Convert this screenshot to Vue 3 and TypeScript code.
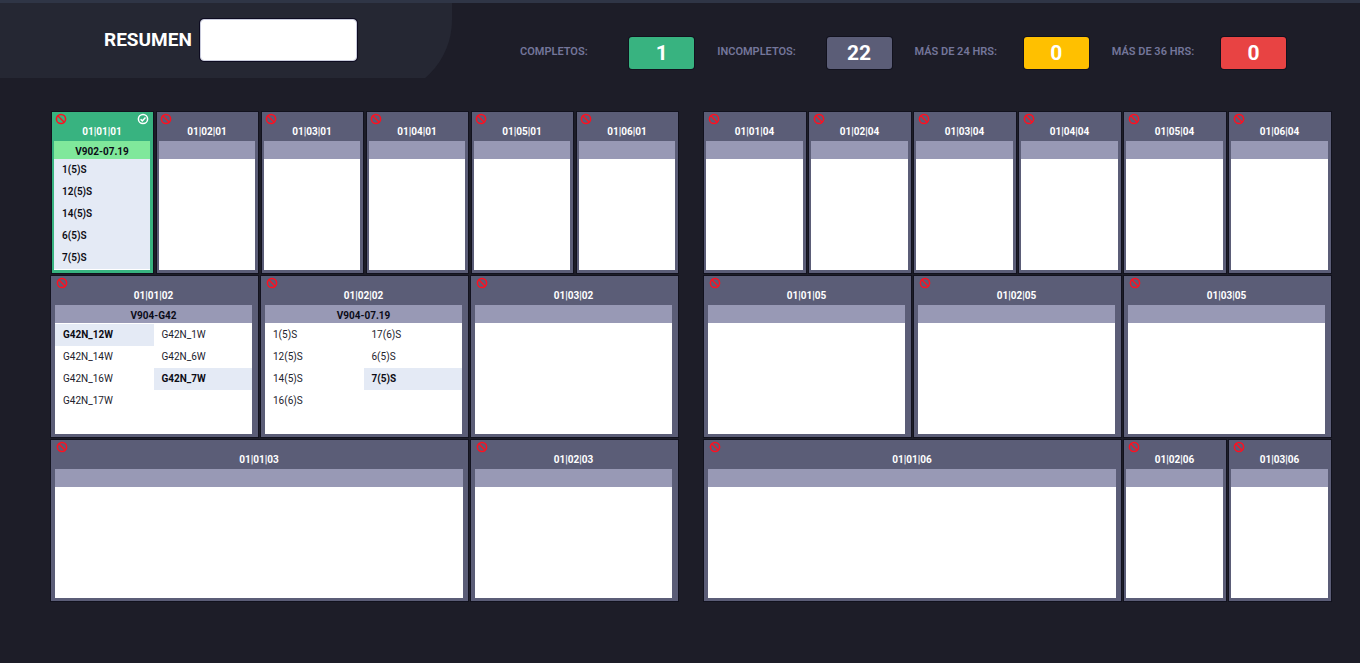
<script setup lang="ts">
import { ref } from 'vue'

interface Item {
  label: string
  active?: boolean
}

interface Slot {
  code: string
  span: number
  model?: string
  items?: Item[]
  done?: boolean
}

interface Stat {
  label: string
  value: number
  tone: string
}

const search = ref('')

const stats: Stat[] = [
  { label: 'COMPLETOS:', value: 1, tone: 'green' },
  { label: 'INCOMPLETOS:', value: 22, tone: 'slate' },
  { label: 'MÁS DE 24 HRS:', value: 0, tone: 'amber' },
  { label: 'MÁS DE 36 HRS:', value: 0, tone: 'red' },
]

const single = (position: number, level: string): Slot => ({
  code: `01|0${position}|${level}`,
  span: 1,
})

const boards: { name: string; slots: Slot[] }[] = [
  {
    name: 'left',
    slots: [
      {
        code: '01|01|01',
        span: 1,
        model: 'V902-07.19',
        done: true,
        items: ['1(5)S', '12(5)S', '14(5)S', '6(5)S', '7(5)S'].map((label) => ({ label, active: true })),
      },
      ...[2, 3, 4, 5, 6].map((n) => single(n, '01')),
      {
        code: '01|01|02',
        span: 2,
        model: 'V904-G42',
        items: [
          { label: 'G42N_12W', active: true },
          { label: 'G42N_14W' },
          { label: 'G42N_16W' },
          { label: 'G42N_17W' },
          { label: 'G42N_1W' },
          { label: 'G42N_6W' },
          { label: 'G42N_7W', active: true },
        ],
      },
      {
        code: '01|02|02',
        span: 2,
        model: 'V904-07.19',
        items: [
          { label: '1(5)S' },
          { label: '12(5)S' },
          { label: '14(5)S' },
          { label: '16(6)S' },
          { label: '17(6)S' },
          { label: '6(5)S' },
          { label: '7(5)S', active: true },
        ],
      },
      { code: '01|03|02', span: 2 },
      { code: '01|01|03', span: 4 },
      { code: '01|02|03', span: 2 },
    ],
  },
  {
    name: 'right',
    slots: [
      ...[1, 2, 3, 4, 5, 6].map((n) => single(n, '04')),
      { code: '01|01|05', span: 2 },
      { code: '01|02|05', span: 2 },
      { code: '01|03|05', span: 2 },
      { code: '01|01|06', span: 4 },
      { code: '01|02|06', span: 1 },
      { code: '01|03|06', span: 1 },
    ],
  },
]
</script>

<template>
  <div class="page">
    <header class="top">
      <div class="summary">
        <label class="summary-label" for="summary-input">RESUMEN</label>
        <input id="summary-input" v-model="search" class="summary-input" type="text" />
      </div>
      <dl class="stats">
        <div v-for="stat in stats" :key="stat.label" class="stat">
          <dt class="stat-label">{{ stat.label }}</dt>
          <dd class="stat-value" :class="stat.tone">{{ stat.value }}</dd>
        </div>
      </dl>
    </header>

    <main class="boards">
      <section v-for="board in boards" :key="board.name" class="board" :class="board.name">
        <article
          v-for="slot in board.slots"
          :key="slot.code"
          class="slot"
          :class="[`span-${slot.span}`, { done: slot.done }]"
        >
          <header class="slot-head">
            <svg class="ban" viewBox="0 0 12 12" aria-hidden="true">
              <circle cx="6" cy="6" r="4.6" />
              <path d="M2.8 2.8l6.4 6.4" />
            </svg>
            <h2 class="slot-code">{{ slot.code }}</h2>
            <svg v-if="slot.done" class="check" viewBox="0 0 12 12" aria-hidden="true">
              <circle cx="6" cy="6" r="4.6" />
              <path d="M3.6 6.2l1.7 1.7 3.2-3.5" />
            </svg>
          </header>
          <div class="slot-model">{{ slot.model }}</div>
          <ul class="items">
            <li v-for="item in slot.items" :key="item.label" class="item" :class="{ active: item.active }">
              {{ item.label }}
            </li>
          </ul>
        </article>
      </section>
    </main>
  </div>
</template>

<style>
html {
  background: #1d1d28;
}
body {
  margin: 0;
}
</style>

<style scoped>
.page {
  box-sizing: border-box;
  min-height: 100vh;
  border-top: 3px solid #2f3546;
  background: #1d1d28;
  color: #fff;
  font-family: Roboto, "Liberation Sans", sans-serif;
}
.top {
  display: flex;
  align-items: flex-start;
}
.summary {
  position: relative;
  box-sizing: border-box;
  display: flex;
  align-items: center;
  gap: 8px;
  width: 452px;
  height: 75px;
  padding: 0 0 2px 104px;
  overflow: hidden;
}
.summary::before {
  content: "";
  position: absolute;
  inset: 0 0 -18px;
  background: #252733;
  border-bottom-right-radius: 76px;
}
.summary-label {
  position: relative;
  width: 88px;
  font-size: 19px;
  font-weight: 700;
  line-height: 24px;
}
.summary-input {
  position: relative;
  box-sizing: border-box;
  width: 157px;
  height: 42px;
  padding: 0 12px;
  border: 1px solid #c9cbdc;
  border-radius: 4px;
  background: #fff;
  box-shadow: 0 0 0 1px #0d0b20;
  color: #222;
  font: inherit;
  font-size: 14px;
}
.stats {
  flex: 1;
  display: grid;
  grid-template-columns: repeat(4, 1fr);
  gap: 23px;
  margin: 34px 74px 0 68px;
}
.stat {
  display: flex;
  align-items: center;
  justify-content: space-between;
}
.stat-label {
  color: #74769a;
  font-size: 11px;
  font-weight: 600;
  line-height: 28px;
  padding-bottom: 2px;
  white-space: nowrap;
}
.stat-value {
  width: 65px;
  margin: 0;
  border-radius: 3px;
  box-shadow: 0 0 0 1px #12121e;
  font-size: 21px;
  font-weight: 700;
  line-height: 32px;
  text-align: center;
}
.stat-value.green {
  background: #38b380;
}
.stat-value.slate {
  background: #5b5d77;
}
.stat-value.amber {
  background: #ffc000;
}
.stat-value.red {
  background: #e84343;
}
.boards {
  display: grid;
  grid-template-columns: 1fr 1fr;
  gap: 26px;
  padding: 34px 29px 62px 51px;
}
.board {
  display: grid;
  grid-template-columns: repeat(6, 1fr);
  gap: 3px;
}
.slot {
  display: flex;
  flex-direction: column;
  padding: 0 6px 3px 4px;
  background: #5b5d77;
  box-shadow: 0 0 0 1px #12121e;
}
.span-1 {
  padding: 0 3px 3px 2px;
}
.left .span-1 {
  margin-left: 1px;
}
.span-2 {
  grid-column: span 2;
}
.span-4 {
  grid-column: span 4;
  padding-right: 5px;
}
.slot.done {
  background: #38b380;
}
.slot-head {
  position: relative;
  padding: 13px 0 2px;
}
.slot-code {
  margin: 0;
  font-size: 10px;
  font-weight: 700;
  line-height: 14px;
  text-align: center;
}
.ban,
.check {
  position: absolute;
  top: 1px;
  width: 12px;
  height: 12px;
  fill: none;
}
.ban {
  left: 1px;
  stroke: #ff1020;
  stroke-width: 1.5;
}
.right .span-1 .ban {
  left: 2px;
}
.check {
  right: 1px;
  stroke: #fff;
  stroke-width: 1.5;
}
.slot-model {
  height: 18px;
  background: #9899b5;
  color: #0c0c18;
  font-size: 10px;
  font-weight: 700;
  line-height: 22px;
  text-align: center;
}
.done .slot-model {
  background: #80e89b;
}
.items {
  box-sizing: border-box;
  display: grid;
  grid-auto-flow: column;
  grid-template-rows: repeat(5, 22px);
  height: 111px;
  margin: 0;
  padding: 0;
  background: #fff;
  list-style: none;
}
.span-2 .items {
  grid-template-rows: repeat(4, 22px);
  grid-template-columns: 1fr 1fr;
  padding-top: 1px;
}
.item {
  padding-left: 8px;
  color: #22222c;
  font-size: 10px;
  line-height: 22px;
}
.item.active {
  background: #e4eaf5;
  color: #0c0c14;
  font-weight: 700;
}
.done .item.active {
  font-weight: 600;
}
</style>
